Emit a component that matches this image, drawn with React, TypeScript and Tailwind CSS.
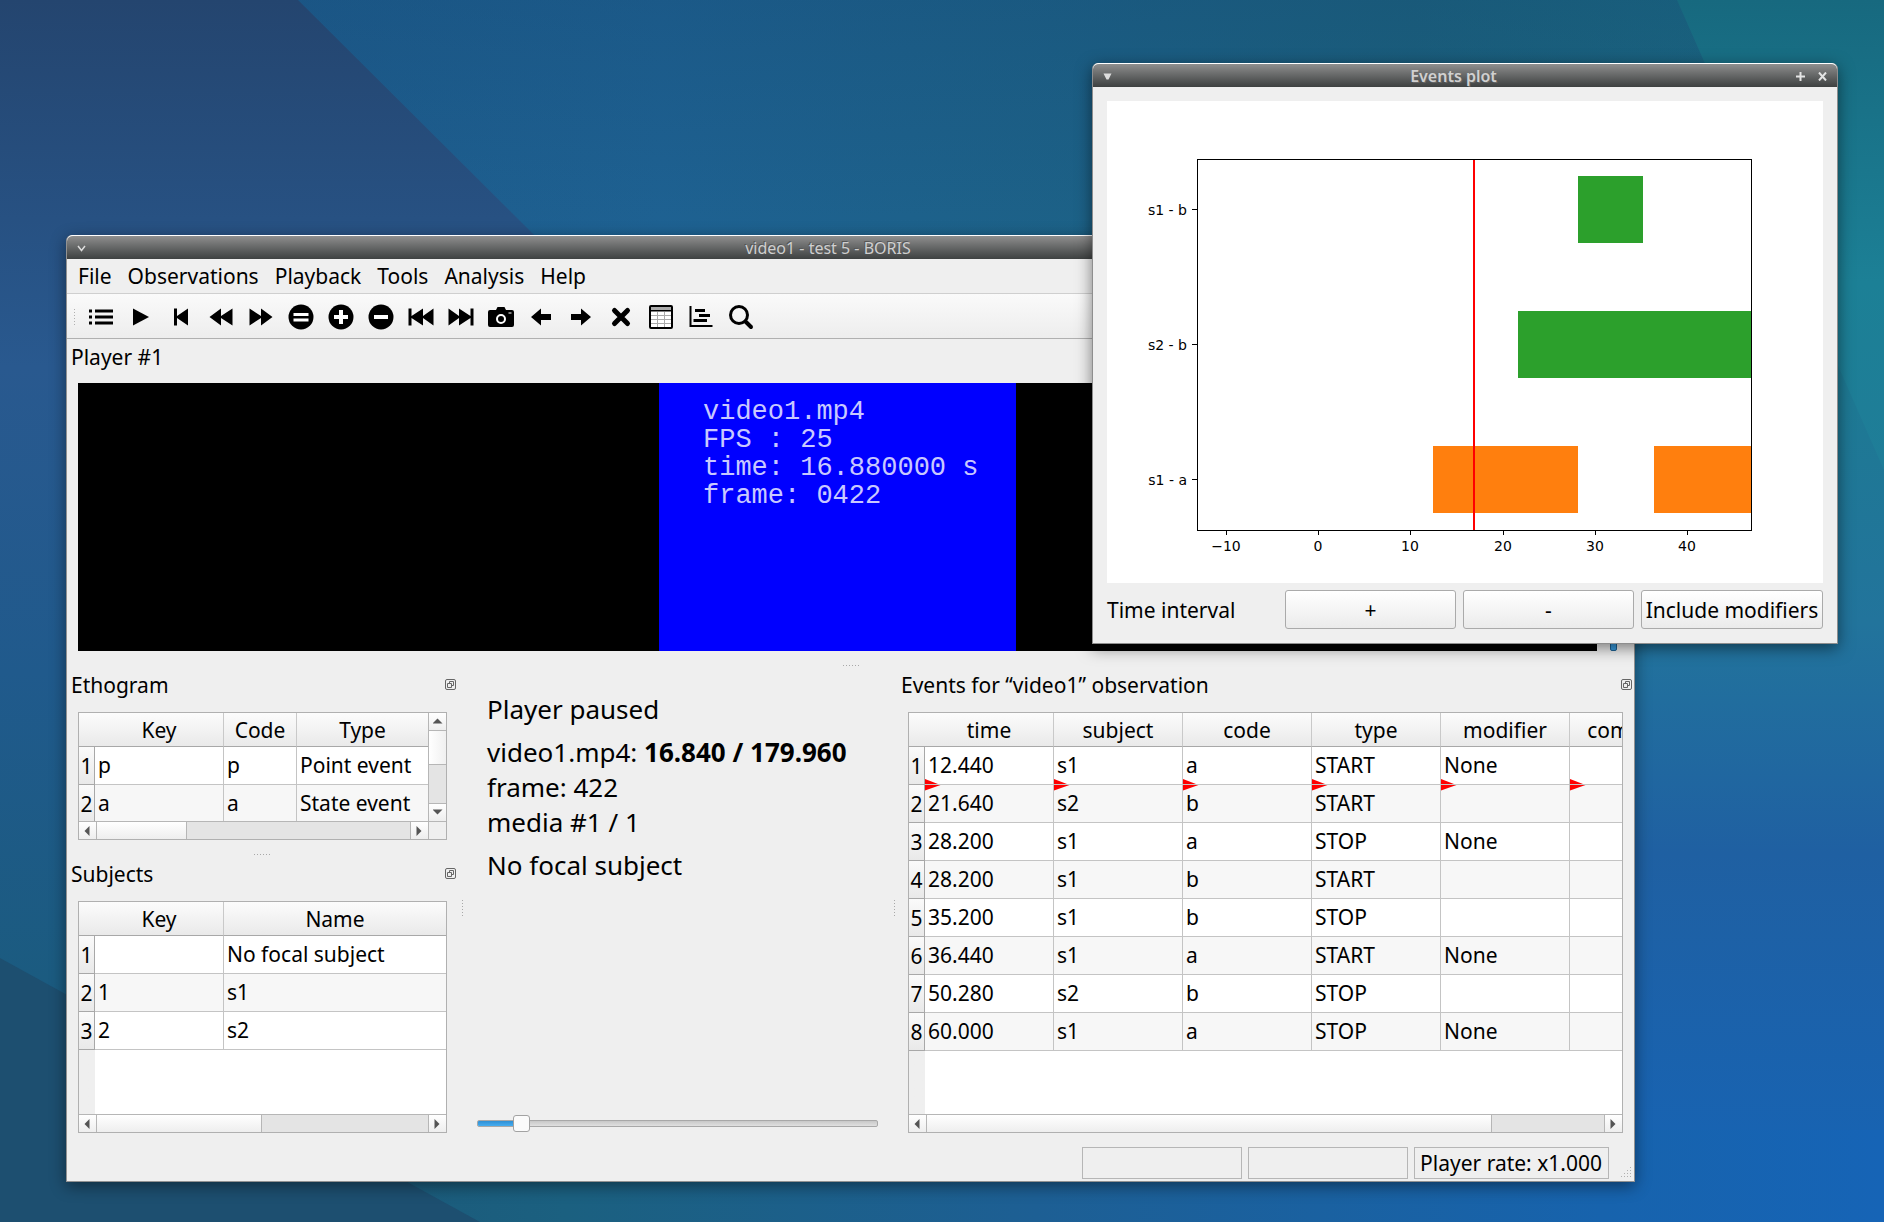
/** Desktop with the BORIS main window and the events plot window. */

import { ReactNode, useState } from 'react';

const MENUS = ['File', 'Observations', 'Playback', 'Tools', 'Analysis', 'Help'];

const MEDIA_TIME = 16.84;
const MEDIA_DURATION = 179.96;

const EVENT_COLUMNS = ['time', 'subject', 'code', 'type', 'modifier', 'comment'];
const EVENTS = [
  ['12.440', 's1', 'a', 'START', 'None', ''],
  ['21.640', 's2', 'b', 'START', '', ''],
  ['28.200', 's1', 'a', 'STOP', 'None', ''],
  ['28.200', 's1', 'b', 'START', '', ''],
  ['35.200', 's1', 'b', 'STOP', '', ''],
  ['36.440', 's1', 'a', 'START', 'None', ''],
  ['50.280', 's2', 'b', 'STOP', '', ''],
  ['60.000', 's1', 'a', 'STOP', 'None', ''],
];

const ETHOGRAM = [
  ['p', 'p', 'Point event'],
  ['a', 'a', 'State event'],
];

const SUBJECTS = [
  ['', 'No focal subject'],
  ['1', 's1'],
  ['2', 's2'],
];

const TOOLS: { label: string; icon: ReactNode }[] = [
  {
    label: 'Observations list',
    icon: <path d="M0 4.5h3v3H0zM0 10.5h3v3H0zM0 16.5h3v3H0zM6 4.5h18v3H6zM6 10.5h18v3H6zM6 16.5h18v3H6z" />,
  },
  { label: 'Play', icon: <path d="M4 3.5L20 12L4 20.5z" /> },
  { label: 'Jump to start', icon: <path d="M5 3.5h3v7.5L19 3.5v17L8 13v7.5H5z" /> },
  { label: 'Jump backward', icon: <path d="M0.5 12L12 3.5V11L23.5 3.5v17L12 13v7.5z" /> },
  { label: 'Jump forward', icon: <path d="M23.5 12L12 3.5V11L0.5 3.5v17L12 13v7.5z" /> },
  {
    label: 'Playback speed normal',
    icon: (
      <>
        <circle cx="12" cy="12" r="12.5" />
        <path fill="#fff" d="M4.5 8h15v3h-15zM4.5 13.5h15v3h-15z" />
      </>
    ),
  },
  {
    label: 'Increase playback speed',
    icon: (
      <>
        <circle cx="12" cy="12" r="12.5" />
        <path fill="#fff" d="M10 5h4v5h5v4h-5v5h-4v-5H5v-4h5z" />
      </>
    ),
  },
  {
    label: 'Decrease playback speed',
    icon: (
      <>
        <circle cx="12" cy="12" r="12.5" />
        <path fill="#fff" d="M5 10h14v4H5z" />
      </>
    ),
  },
  { label: 'Previous media', icon: <path d="M-0.5 3.5h3V11L14 3.5V11L24.5 3.5v17L14 13v7.5L2.5 13v7.5h-3z" /> },
  { label: 'Next media', icon: <path d="M24.5 3.5h-3V11L10 3.5V11L-0.5 3.5v17L10 13v7.5L21.5 13v7.5h3z" /> },
  {
    label: 'Snapshot',
    icon: (
      <>
        <path d="M1 5h6l1.5-3h7L17 5h6q2 0 2 2v13q0 2-2 2H1q-2 0-2-2V7q0-2 2-2z" />
        <circle cx="12" cy="14" r="4" fill="none" stroke="#fff" strokeWidth="2" />
        <path stroke="#fff" d="M19.5 8h3" />
      </>
    ),
  },
  { label: 'Previous frame', icon: <path d="M2 12L12 3.5V9h10v6H12v5.5z" /> },
  { label: 'Next frame', icon: <path d="M22 12L12 3.5V9H2v6h10v5.5z" /> },
  {
    label: 'Close observation',
    icon: <path fill="none" stroke="#000" strokeWidth="5" strokeLinecap="round" d="M5.5 5.5l13 13M18.5 5.5l-13 13" />,
  },
  {
    label: 'Events table',
    icon: (
      <>
        <rect x="1" y="1" width="22" height="22" rx="1" fill="#fff" stroke="#000" strokeWidth="2" />
        <path fill="#aaa" d="M2 2h20v3.5H2z" />
        <path fill="none" stroke="#aaa" d="M2 10.5h20M2 14.5h20M2 18.5h20M8.5 7v15M15.5 7v15" />
        <path d="M2 5h20v1.5H2z" />
      </>
    ),
  },
  {
    label: 'Plot events',
    icon: <path d="M0.5 1h2v19h21v2h-23zM6 4h10v3H6zM10 9h11v3H10zM4.5 14H18v3H4.5z" />,
  },
  {
    label: 'Find',
    icon: (
      <>
        <circle cx="10" cy="10" r="8.5" fill="none" stroke="#000" strokeWidth="3" />
        <path stroke="#000" strokeWidth="4" strokeLinecap="round" d="M17 17l5 5" />
      </>
    ),
  },
];

function Wallpaper() {
  return (
    <svg className="absolute inset-0 h-full w-full" viewBox="0 0 1884 1222" preserveAspectRatio="none" aria-hidden="true">
      <defs>
        <linearGradient id="base" x1="0" y1="0" x2="1" y2="0">
          <stop offset="0" stopColor="#1e5a8c" />
          <stop offset="0.35" stopColor="#1f6495" />
          <stop offset="0.75" stopColor="#1c6480" />
          <stop offset="1" stopColor="#1b6f86" />
        </linearGradient>
        <linearGradient id="topShade" x1="0" y1="0" x2="0" y2="1">
          <stop offset="0" stopColor="#12406a" stopOpacity="0.3" />
          <stop offset="1" stopColor="#12406a" stopOpacity="0" />
        </linearGradient>
        <linearGradient id="left" x1="0" y1="0" x2="0" y2="1">
          <stop offset="0" stopColor="#24456f" />
          <stop offset="0.3" stopColor="#29598f" />
          <stop offset="0.55" stopColor="#205a8c" />
          <stop offset="0.8" stopColor="#1b5b80" />
          <stop offset="1" stopColor="#1b5575" />
        </linearGradient>
        <linearGradient id="bottom" x1="0" y1="0" x2="1" y2="0">
          <stop offset="0" stopColor="#1c5070" />
          <stop offset="0.3" stopColor="#1b6080" />
          <stop offset="0.55" stopColor="#1d5f94" />
          <stop offset="0.85" stopColor="#1763ad" />
          <stop offset="1" stopColor="#1664b6" />
        </linearGradient>
        <linearGradient id="rightTop" x1="0" y1="0" x2="0" y2="1">
          <stop offset="0" stopColor="#17697f" />
          <stop offset="0.6" stopColor="#1c8096" />
          <stop offset="1" stopColor="#1f7d98" />
        </linearGradient>
        <linearGradient id="rightLow" x1="0" y1="0" x2="0" y2="1">
          <stop offset="0" stopColor="#1c7b90" />
          <stop offset="0.35" stopColor="#22749c" />
          <stop offset="0.6" stopColor="#1f60a2" />
          <stop offset="1" stopColor="#1664b6" />
        </linearGradient>
      </defs>
      <path fill="url(#base)" d="M0 0h1884v1222H0z" />
      <path fill="url(#topShade)" d="M0 0h1884v300H0z" />
      <path fill="url(#rightLow)" d="M1600 300h284v922h-284z" />
      <path fill="url(#rightTop)" d="M1677 0h207v470z" />
      <path fill="url(#left)" d="M0 0h298L700 400v822H0z" />
      <path fill="url(#bottom)" d="M0 1130h1884v92H0z" />
      <path fill="#1d4f70" d="M0 958L480 1222H0z" />
    </svg>
  );
}

interface TitleBarProps {
  title: string;
  active?: boolean;
  children: ReactNode;
}

function TitleBar({ title, active = false, children }: TitleBarProps) {
  return (
    <header className="flex h-6 items-center rounded-t-md border-t border-white bg-linear-to-b from-[#8f8f8f] to-[#3e4141] pt-px pr-1 pl-[3px]">
      <button type="button" aria-label="Window menu" className="flex w-[22px] justify-center">
        <svg width="9" height="7" viewBox="0 0 9 7">
          {active ? (
            <path d="M0.5 0.5h8L5.5 6.5h-2z" fill="#ddd" />
          ) : (
            <path d="M1 1l3.5 4.500L8 1" fill="none" stroke="#ddd" strokeWidth="1.5" />
          )}
        </svg>
      </button>
      <h1
        className={
          active
            ? 'flex-1 text-center text-base leading-5 font-semibold text-[#d0d0d0] [text-shadow:1px_1px_0_#666]'
            : 'flex-1 text-center text-base leading-5 text-[#cfcfcf] [text-shadow:-1px_-1px_0_#555]'
        }
      >
        {title}
      </h1>
      {children}
    </header>
  );
}

function TitleButton({ label, d }: { label: string; d: string }) {
  return (
    <button type="button" aria-label={label} className="flex w-[22px] justify-center">
      <svg width="9" height="9" viewBox="0 0 9 9">
        <path d={d} stroke="#e4e4e4" strokeWidth="2" />
      </svg>
    </button>
  );
}

function DockTitle({ title, floating = true }: { title: string; floating?: boolean }) {
  return (
    <div className="flex h-9 shrink-0 items-center justify-between pl-1">
      <h2>{title}</h2>
      {floating && (
        <button type="button" aria-label={`Float ${title}`}>
          <svg width="12" height="12" viewBox="0 0 12 12" fill="none" stroke="#666">
            <rect x="0.5" y="0.5" width="10" height="10" rx="1.5" />
            <path d="M4.500 4.500V2.500h4v4h-2M2.500 4.500h4v4h-4z" />
          </svg>
        </button>
      )}
    </div>
  );
}

function HSplitter() {
  return (
    <div className="flex h-4 shrink-0 items-end justify-center pb-px">
      <span className="h-px w-4 bg-[repeating-linear-gradient(90deg,#a8a8a8_0_1px,transparent_1px_3px)]" />
    </div>
  );
}

function VSplitter({ className }: { className: string }) {
  return (
    <div className={`flex items-center justify-center pt-4 ${className}`}>
      <span className="h-4 w-px bg-[repeating-linear-gradient(180deg,#a8a8a8_0_1px,transparent_1px_3px)]" />
    </div>
  );
}

function ArrowButton({ d, label, className }: { d: string; label: string; className: string }) {
  return (
    <button
      type="button"
      aria-label={label}
      className={`flex h-[17px] w-[17px] shrink-0 items-center justify-center bg-linear-to-b from-white to-[#eee] ${className}`}
    >
      <svg width="10" height="10" viewBox="0 0 10 10">
        <path d={d} fill="#555" />
      </svg>
    </button>
  );
}

// thumb is the share of the groove that the handle covers, in percent
function HScrollBar({ thumb }: { thumb: number }) {
  return (
    <div className="flex h-[18px] min-w-0 flex-1 border-t border-[#b6b6b6] bg-[#e4e4e4]">
      <ArrowButton label="Scroll left" d="M6.500 0v10L1.500 5z" className="" />
      <div className="flex-1">
        <div
          className="h-full border-x border-[#b6b6b6] bg-linear-to-b from-white to-[#eee]"
          style={{ width: `${thumb}%` }}
        />
      </div>
      <ArrowButton label="Scroll right" d="M1.500 0v10L6.500 5z" className="box-content border-l border-[#b6b6b6]" />
    </div>
  );
}

function VScrollBar() {
  return (
    <div className="flex w-[18px] shrink-0 flex-col border-l border-[#b6b6b6] bg-[#e4e4e4]">
      <ArrowButton label="Scroll up" d="M-0.500 6.500h10L4.500 1.500z" className="" />
      <div className="flex-1">
        <div className="h-[35px] border-y border-[#b6b6b6] bg-linear-to-r from-white to-[#f0f0f0]" />
      </div>
      <ArrowButton
        label="Scroll down"
        d="M-0.500 1.500h10L4.500 6.500z"
        className="box-content border-t border-[#b6b6b6]"
      />
    </div>
  );
}

interface GridProps {
  label: string;
  columns: string[];
  widths: string[];
  rows: string[][];
  className: string;
  marker?: number;
}

function Grid({ label, columns, widths, rows, className, marker }: GridProps) {
  return (
    <div className="min-h-0 min-w-0 flex-1 overflow-hidden bg-white">
      <div className="flex h-full bg-linear-to-r from-[#efefef] from-[16px] to-white to-[16px]">
        <table aria-label={label} className={`table-fixed self-start border-separate border-spacing-0 ${className}`}>
          <colgroup>
            <col className="w-4" />
            {widths.map((width, i) => (
              <col key={i} className={width} />
            ))}
          </colgroup>
          <thead>
            <tr className="h-[34px] bg-linear-to-b from-[#fcfcfc] to-[#e9e9e9]">
              <td className="border-b border-[#a8a8a8] p-0" />
              {columns.map((column) => (
                <th
                  key={column}
                  scope="col"
                  className="border-r border-b border-r-[#c9c9c9] border-b-[#a8a8a8] p-0 font-normal last:border-r-0"
                >
                  {column}
                </th>
              ))}
            </tr>
          </thead>
          <tbody>
            {rows.map((row, i) => (
              <tr key={i} className="h-[38px] even:bg-[#f7f7f7]">
                <th
                  scope="row"
                  className="border-r border-b border-[#a8a8a8] bg-linear-to-b from-[#fafafa] to-[#e9e9e9] p-0 font-normal"
                >
                  {i + 1}
                </th>
                {row.map((cell, j) => (
                  <td
                    key={j}
                    className="relative border-r border-b border-[#c4c4c4] p-0 pb-[2px] pl-[3px] last:border-r-0"
                  >
                    {cell}
                    {marker === i && (
                      <svg className="absolute -bottom-[7px] left-0 z-10" width="16" height="12" viewBox="0 0 16 12">
                        <path d="M0 0L15.500 6L0 11.500z" fill="#f00" />
                        <path d="M0 5.500h16" stroke="#c4c4c4" />
                      </svg>
                    )}
                  </td>
                ))}
              </tr>
            ))}
          </tbody>
        </table>
      </div>
    </div>
  );
}

function MediaSlider() {
  const [time, setTime] = useState(MEDIA_TIME);

  return (
    <div className="relative mr-[13px] mb-px ml-[10px] flex h-[17px] items-center">
      <div className="h-[7px] w-full overflow-hidden rounded-xs border border-[#a8a8a8] bg-linear-to-b from-[#c8c8c8] to-[#e0e0e0]">
        <div
          className="h-full bg-linear-to-b from-[#2f8fd4] to-[#45adf0] shadow-[0_0_0_1px_#1d6396]"
          style={{ width: `${(time / MEDIA_DURATION) * 100}%` }}
        />
      </div>
      <input
        type="range"
        aria-label="Media position"
        min={0}
        max={MEDIA_DURATION}
        step={0.04}
        value={time}
        onChange={(e) => setTime(Number(e.target.value))}
        className="absolute inset-0 w-full appearance-none bg-transparent [&::-webkit-slider-thumb]:h-[17px] [&::-webkit-slider-thumb]:w-[17px] [&::-webkit-slider-thumb]:appearance-none [&::-webkit-slider-thumb]:rounded-[3px] [&::-webkit-slider-thumb]:border [&::-webkit-slider-thumb]:border-[#a2a2a2] [&::-webkit-slider-thumb]:bg-[#fbfbfb]"
      />
    </div>
  );
}

function MainWindow() {
  return (
    <section className="absolute top-[235px] right-[249px] bottom-10 left-[66px] flex flex-col rounded-t-md border border-t-0 border-[#929292] bg-[#efefef] shadow-[0_4px_16px_rgba(0,0,0,0.45)]">
      <TitleBar title="video1 - test 5 - BORIS">
        <TitleButton label="Minimize" d="M0 7.500h9" />
        <TitleButton label="Maximize" d="M4.500 0v9M0 4.500h9" />
        <TitleButton label="Close" d="M1 0.500l7 8M8 0.500l-7 8" />
      </TitleBar>

      <nav className="flex h-[35px] shrink-0 items-center border-b border-[#cfcfcf] pl-[3px]">
        {MENUS.map((menu) => (
          <button key={menu} type="button" className="px-2">
            {menu}
          </button>
        ))}
      </nav>

      <div className="flex h-[45px] shrink-0 items-center border-b border-[#b0b0b0] bg-linear-to-b from-[#fafafa] to-[#ededed] pt-px">
        <div className="mr-1 ml-[6px] h-[17px] w-1 bg-[radial-gradient(#b0b0b0_1px,transparent_1px)] bg-[size:3px_3px]" />
        {TOOLS.map((tool) => (
          <button key={tool.label} type="button" aria-label={tool.label} className="flex w-10 justify-center">
            <svg width="24" height="24" viewBox="0 0 24 24" className="overflow-visible">
              {tool.icon}
            </svg>
          </button>
        ))}
      </div>

      <DockTitle title="Player #1" floating={false} />
      <div className="mt-2 flex h-[268px] shrink-0 pl-[11px]">
        <div className="flex flex-1 justify-center bg-black">
          <pre className="w-[357px] bg-[#00f] pt-[15px] pl-[44px] font-['Liberation_Mono',monospace] text-[27px] leading-7 text-[#c8c8ff]">
            {'video1.mp4\nFPS : 25\ntime: 16.880000 s\nframe: 0422'}
          </pre>
        </div>
        <div className="flex w-[37px] pl-[13px]">
          <input
            type="range"
            aria-label="Volume"
            defaultValue={100}
            className="h-full w-[7px] appearance-none rounded-xs border border-[#1d6396] bg-[#3a9fe4] [direction:rtl] [writing-mode:vertical-lr]"
          />
        </div>
      </div>
      <HSplitter />

      <div className="flex min-h-0 flex-1">
        <div className="flex w-[390px] shrink-0 flex-col">
          <DockTitle title="Ethogram" />
          <div className="mt-[9px] mr-[10px] ml-[11px] flex h-32 shrink-0 flex-col border border-[#b0b0b0]">
            <div className="flex min-h-0 flex-1">
              <Grid
                label="Ethogram"
                columns={['Key', 'Code', 'Type']}
                widths={['w-[129px]', 'w-[73px]', 'w-[131px]']}
                rows={ETHOGRAM}
                className="w-[349px]"
              />
              <VScrollBar />
            </div>
            <div className="flex">
              <HScrollBar thumb={29} />
              <div className="w-[18px] border-t border-l border-[#b6b6b6]" />
            </div>
          </div>
          <HSplitter />
          <DockTitle title="Subjects" />
          <div className="mt-[9px] mr-[10px] ml-[11px] flex min-h-0 flex-1 flex-col border border-[#b0b0b0]">
            <Grid
              label="Subjects"
              columns={['Key', 'Name']}
              widths={['w-[129px]', 'w-[222px]']}
              rows={SUBJECTS}
              className="w-[367px]"
            />
            <div className="flex">
              <HScrollBar thumb={50} />
            </div>
          </div>
        </div>

        <VSplitter className="w-[10px]" />

        <div className="flex min-w-0 flex-1 flex-col justify-between">
          <div className="space-y-2 pt-[25px] pl-5 text-[26px] leading-[35px]">
            <p>Player paused</p>
            <p>
              video1.mp4: <b>16.840 / 179.960</b>
              <br />
              frame: 422
              <br />
              media #1 / 1
            </p>
            <p>No focal subject</p>
          </div>
          <MediaSlider />
        </div>

        <VSplitter className="w-[6px]" />

        <div className="flex w-[737px] shrink-0 flex-col pr-px">
          <DockTitle title="Events for “video1” observation" />
          <div className="mt-[9px] mr-[10px] ml-[11px] flex min-h-0 flex-1 flex-col border border-[#b0b0b0]">
            <Grid
              label="Events"
              columns={EVENT_COLUMNS}
              widths={EVENT_COLUMNS.map(() => 'w-[129px]')}
              rows={EVENTS}
              className="w-[790px] shrink-0"
              marker={0}
            />
            <div className="flex">
              <HScrollBar thumb={83.5} />
            </div>
          </div>
        </div>
      </div>

      <footer className="flex h-12 shrink-0 items-end justify-end gap-[6px] pr-[2px] pb-[2px]">
        <div className="h-8 w-40 border border-[#b6b6b6]" />
        <div className="h-8 w-40 border border-[#b6b6b6]" />
        <div className="h-8 border border-[#b6b6b6] pr-[6px] pl-[5px] leading-[30px]">Player rate: x1.000</div>
        <svg width="17" height="12" viewBox="0 0 17 12" fill="#b0b0b0" aria-hidden="true">
          <path d="M15 0h1v1h-1zM15 3h1v1h-1zM12 3h1v1h-1zM15 6h1v1h-1zM12 6h1v1h-1zM9 6h1v1h-1zM15 9h1v1h-1zM12 9h1v1h-1zM9 9h1v1h-1zM6 9h1v1h-1z" />
        </svg>
      </footer>
    </section>
  );
}

const PLOT = { left: 90, right: 644, top: 58, bottom: 429, rowHeight: 67 };
const START = MEDIA_TIME - 30;
const END = MEDIA_TIME + 30;

const PLOT_ROWS = [
  { label: 's1 - b', y: 75, color: '#2ca02c', bars: [[28.2, 35.2]] },
  { label: 's2 - b', y: 210, color: '#2ca02c', bars: [[21.64, 50.28]] },
  { label: 's1 - a', y: 345, color: '#ff7f0e', bars: [[12.44, 28.2], [36.44, 60]] },
];

const toX = (time: number) =>
  Math.floor(PLOT.left + ((Math.min(time, END) - START) / (END - START)) * (PLOT.right - PLOT.left));

function EventsPlot() {
  return (
    <svg viewBox="0 0 716 482" className="w-full bg-white font-['DejaVu_Sans',sans-serif] text-[14px]">
      {PLOT_ROWS.map((row) => (
        <g key={row.label}>
          {row.bars.map(([from, to]) => (
            <rect
              key={from}
              x={toX(from)}
              y={row.y}
              width={toX(to) - toX(from)}
              height={PLOT.rowHeight}
              fill={row.color}
            />
          ))}
          <path d={`M${PLOT.left - 5} ${row.y + 33.5}h5`} stroke="#000" />
          <text x={PLOT.left - 10} y={row.y + 39} textAnchor="end">
            {row.label}
          </text>
        </g>
      ))}
      {[-10, 0, 10, 20, 30, 40].map((tick) => (
        <g key={tick}>
          <path d={`M${toX(tick) + 0.5} ${PLOT.bottom}v5`} stroke="#000" />
          <text x={toX(tick)} y={PLOT.bottom + 21} textAnchor="middle">
            {tick < 0 ? `−${-tick}` : tick}
          </text>
        </g>
      ))}
      <path d={`M${toX(MEDIA_TIME)} ${PLOT.top}V${PLOT.bottom}`} stroke="#f00" strokeWidth="2" />
      <rect
        x={PLOT.left + 0.5}
        y={PLOT.top + 0.5}
        width={PLOT.right - PLOT.left}
        height={PLOT.bottom - PLOT.top}
        fill="none"
        stroke="#000"
      />
    </svg>
  );
}

function PlotButton({ children, className }: { children: ReactNode; className: string }) {
  return (
    <button
      type="button"
      className={`h-[39px] rounded-[3px] border border-[#aaa] bg-linear-to-b from-white to-[#ebebeb] ${className}`}
    >
      {children}
    </button>
  );
}

function EventsPlotWindow() {
  return (
    <section className="absolute top-[63px] right-[46px] w-[746px] rounded-t-md border border-t-0 border-[#8e8e8e] bg-[#efefef] shadow-[0_4px_16px_rgba(0,0,0,0.5)]">
      <TitleBar title="Events plot" active>
        <TitleButton label="Maximize" d="M4.500 0v9M0 4.500h9" />
        <TitleButton label="Close" d="M1 0.500l7 8M8 0.500l-7 8" />
      </TitleBar>
      <div className="flex flex-col gap-[7px] p-[14px]">
        <EventsPlot />
        <div className="flex items-center gap-[7px]">
          <span className="w-[171px]">Time interval</span>
          <PlotButton className="flex-1">+</PlotButton>
          <PlotButton className="flex-1">-</PlotButton>
          <PlotButton className="w-[182px] whitespace-nowrap">Include modifiers</PlotButton>
        </div>
      </div>
    </section>
  );
}

export default function App() {
  return (
    <main className="relative h-screen overflow-hidden bg-[#1d5f8c] font-['Noto_Sans',sans-serif] text-[21px] leading-7 text-black">
      <Wallpaper />
      <MainWindow />
      <EventsPlotWindow />
    </main>
  );
}
